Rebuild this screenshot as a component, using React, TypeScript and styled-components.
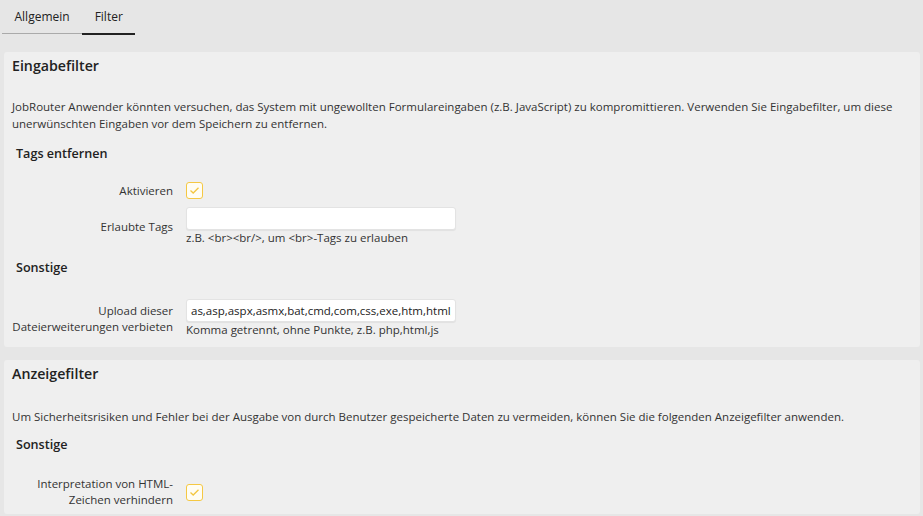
import React from 'react';
import styled, { createGlobalStyle } from 'styled-components';

const GlobalStyle = createGlobalStyle`
    html, body {
        margin: 0;
        padding: 0;
        background: #e6e6e6;
    }
    body {
        font-family: "Open Sans", "Liberation Sans", sans-serif;
        font-size: 11.5px;
        color: #333;
    }
`;

const Page = styled.div`
    width: 923px;
    height: 516px;
    overflow: hidden;
    background: #e6e6e6;
`;

const TabBar = styled.div`
    display: flex;
    padding: 0 0 0 2px;
    height: 35px;
`;

const Tab = styled.div<{ $active?: boolean }>`
    box-sizing: border-box;
    height: ${p => (p.$active ? '35px' : '34px')};
    padding: 8px 12.5px 0 12.5px;
    color: #222;
    font-size: 12px;
    line-height: 17px;
    border-bottom: ${p => (p.$active ? '2px solid #222' : '1px solid #aaa')};
`;

const Panel = styled.section`
    margin: 17px 3px 0 4px;
    background: #efefef;
    border-radius: 3px;
    padding: 4px 8px 0 8px;
    & + & {
        margin-top: 13px;
    }
`;

const PanelTitle = styled.h2`
    margin: 0;
    font-size: 14.2px;
    font-weight: 600;
    line-height: 20px;
    color: #222;
`;

const Description = styled.p<{ $top: number }>`
    margin: ${p => p.$top}px 0 0 0;
    line-height: 17px;
`;

const SubTitle = styled.h3<{ $top: number }>`
    margin: ${p => p.$top}px 0 0 4px;
    font-size: 12.6px;
    font-weight: 600;
    line-height: 18px;
    color: #222;
`;

const FieldRow = styled.div<{ $top: number }>`
    display: flex;
    align-items: center;
    margin-top: ${p => p.$top}px;
`;

const Label = styled.label`
    width: 161px;
    margin-right: 13px;
    text-align: right;
    line-height: 16px;
`;

const Control = styled.div`
    display: flex;
    flex-direction: column;
`;

const TextInput = styled.input`
    box-sizing: border-box;
    width: 270px;
    height: 23px;
    padding: 2px 4px;
    border: 1px solid #e3e3e3;
    border-radius: 3px;
    background: #fff;
    box-shadow: 0 1px 1px rgba(0, 0, 0, 0.06);
    font-family: "Open Sans", "Liberation Sans", sans-serif;
    font-size: 11.5px;
    color: #222;
    outline: none;
`;

const Hint = styled.span`
    margin-top: 0;
    line-height: 16px;
    color: #333;
`;

const CheckBox = styled.span`
    box-sizing: border-box;
    display: flex;
    align-items: center;
    justify-content: center;
    width: 17px;
    height: 17px;
    border: 1px solid #f5c843;
    border-radius: 3px;
    background: #fffdf3;
`;

const Check = () => (
    <CheckBox>
        <svg width="11" height="9" viewBox="0 0 11 9">
            <path d="M1.5 4.5 L4.2 7 L9.5 1.8" fill="none" stroke="#f3c640" strokeWidth="1.3" />
        </svg>
    </CheckBox>
);

const App: React.FC = () => {
    return (
        <Page>
            <GlobalStyle />
            <TabBar>
                <Tab>Allgemein</Tab>
                <Tab $active>Filter</Tab>
            </TabBar>

            <Panel style={{ height: 291 }}>
                <PanelTitle>Eingabefilter</PanelTitle>
                <Description $top={22}>
                    JobRouter Anwender könnten versuchen, das System mit ungewollten Formulareingaben (z.B. JavaScript) zu kompromittieren. Verwenden Sie Eingabefilter, um diese unerwünschten Eingaben vor dem Speichern zu entfernen.
                </Description>
                <SubTitle $top={13}>Tags entfernen</SubTitle>
                <FieldRow $top={19}>
                    <Label>Aktivieren</Label>
                    <Check />
                </FieldRow>
                <FieldRow $top={8}>
                    <Label>Erlaubte Tags</Label>
                    <Control>
                        <TextInput defaultValue="" />
                        <Hint>z.B. &lt;br&gt;&lt;br/&gt;, um &lt;br&gt;-Tags zu erlauben</Hint>
                    </Control>
                </FieldRow>
                <SubTitle $top={13}>Sonstige</SubTitle>
                <FieldRow $top={22}>
                    <Label>Upload dieser Dateierweiterungen verbieten</Label>
                    <Control>
                        <TextInput defaultValue="as,asp,aspx,asmx,bat,cmd,com,css,exe,htm,html,js" />
                        <Hint>Komma getrennt, ohne Punkte, z.B. php,html,js</Hint>
                    </Control>
                </FieldRow>
            </Panel>

            <Panel style={{ height: 150 }}>
                <PanelTitle>Anzeigefilter</PanelTitle>
                <Description $top={24}>
                    Um Sicherheitsrisiken und Fehler bei der Ausgabe von durch Benutzer gespeicherte Daten zu vermeiden, können Sie die folgenden Anzeigefilter anwenden.
                </Description>
                <SubTitle $top={11}>Sonstige</SubTitle>
                <FieldRow $top={22}>
                    <Label>Interpretation von HTML-Zeichen verhindern</Label>
                    <Check />
                </FieldRow>
            </Panel>
        </Page>
    );
};

export default App;
